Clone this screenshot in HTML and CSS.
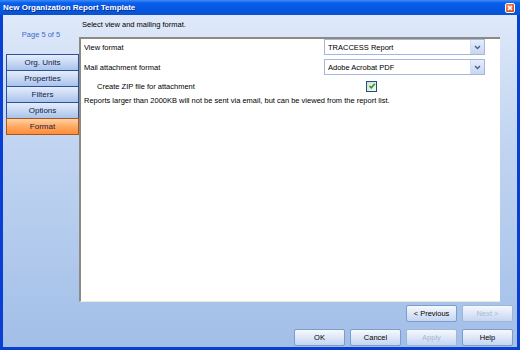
FILE: index.html
```html
<!DOCTYPE html>
<html lang="en">
<head>
    <meta charset="UTF-8">
    <title>New Organization Report Template</title>
    <link rel="stylesheet" href="styles.css">
</head>
<body>
    <div class="window">
        <div class="titlebar">
            <span class="title">New Organization Report Template</span>
            <span class="close-btn">
                <svg width="6" height="6" viewBox="0 0 6 6"><path d="M1 1 L5 5 M5 1 L1 5" stroke="#fff" stroke-width="1.4"/></svg>
            </span>
        </div>

        <div class="frame">
            <div class="main">
                <div class="sidebar">
                    <div class="page-label">Page 5 of 5</div>
                    <div class="nav">
                        <div class="nav-btn">Org. Units</div>
                        <div class="nav-btn">Properties</div>
                        <div class="nav-btn">Filters</div>
                        <div class="nav-btn">Options</div>
                        <div class="nav-btn active">Format</div>
                    </div>
                </div>

                <div class="content">
                    <div class="heading">Select view and mailing format.</div>
                    <div class="panel">
                        <div class="row">
                            <span class="label">View format</span>
                            <div class="select">
                                <span>TRACCESS Report</span>
                                <span class="arrow"><svg width="7" height="5" viewBox="0 0 7 5"><path d="M1 1 L3.5 3.5 L6 1" fill="none" stroke="#4d6185" stroke-width="1.4"/></svg></span>
                            </div>
                        </div>
                        <div class="row">
                            <span class="label">Mail attachment format</span>
                            <div class="select">
                                <span>Adobe Acrobat PDF</span>
                                <span class="arrow"><svg width="7" height="5" viewBox="0 0 7 5"><path d="M1 1 L3.5 3.5 L6 1" fill="none" stroke="#4d6185" stroke-width="1.4"/></svg></span>
                            </div>
                        </div>
                        <div class="row check-row">
                            <span class="label indent">Create ZIP file for attachment</span>
                            <span class="checkbox"><svg width="8" height="8" viewBox="0 0 8 8"><path d="M1.5 4 L3.3 5.8 L6.8 1.8" fill="none" stroke="#21a121" stroke-width="1.6"/></svg></span>
                        </div>
                        <p class="note">Reports larger than 2000KB will not be sent via email, but can be viewed from the report list.</p>
                    </div>
                </div>
            </div>

            <div class="btn-row">
                <button class="btn">&lt; Previous</button>
                <button class="btn" disabled>Next &gt;</button>
            </div>
            <div class="btn-row">
                <button class="btn">OK</button>
                <button class="btn">Cancel</button>
                <button class="btn" disabled>Apply</button>
                <button class="btn">Help</button>
            </div>
        </div>
    </div>
</body>
</html>
```

FILE: styles.css
```css
* {
    margin: 0;
    padding: 0;
    box-sizing: border-box;
}

body {
    font-family: 'Liberation Sans', Arial, sans-serif;
    font-size: 7.5px;
    color: #000;
    background: #fff;
}

.window {
    width: 520px;
    height: 350px;
    display: flex;
    flex-direction: column;
    background: #0a3fd4;
}

.titlebar {
    height: 15px;
    display: flex;
    align-items: center;
    justify-content: space-between;
    padding: 0 5px 0 3px;
    background: linear-gradient(180deg, #3b8cf8 0%, #0a5ee9 20%, #0558e2 60%, #0b52d2 100%);
}

.title {
    color: #fff;
    font-weight: bold;
    font-size: 8px;
    text-shadow: 1px 1px 0 #0a2d8a;
}

.close-btn {
    width: 10px;
    height: 10px;
    display: flex;
    align-items: center;
    justify-content: center;
    border: 1px solid #fff;
    border-radius: 2px;
    background: radial-gradient(circle at 40% 35%, #f5a282 0%, #e4572a 60%, #c8401c 100%);
}

.frame {
    flex: 1;
    display: flex;
    flex-direction: column;
    margin: 0 3px 3px 3px;
    background: linear-gradient(180deg, #dfe9f9 0%, #c3d6f2 35%, #a2bfe8 100%);
}

.main {
    flex: 1;
    display: flex;
}

.sidebar {
    width: 76px;
    display: flex;
    flex-direction: column;
}

.page-label {
    color: #3a6bd0;
    text-align: center;
    height: 39px;
    line-height: 10px;
    padding-top: 15px;
}

.nav {
    margin-left: 3px;
    display: flex;
    flex-direction: column;
}

.nav-btn {
    height: 17px;
    line-height: 15px;
    text-align: center;
    font-size: 8px;
    color: #13204a;
    border: 1px solid #2d4f9e;
    margin-top: -1px;
    background: linear-gradient(180deg, #e4edfb 0%, #c8d9f4 50%, #a9c3ec 100%);
}

.nav-btn:first-child {
    margin-top: 0;
}

.nav-btn.active {
    background: linear-gradient(180deg, #ffd2a6 0%, #ffa962 50%, #ff8b37 100%);
    border-color: #a9571d;
}

.content {
    flex: 1;
    display: flex;
    flex-direction: column;
    margin-right: 17px;
}

.heading {
    height: 22px;
    padding: 5px 0 0 3px;
    line-height: 10px;
}

.panel {
    flex: 1;
    background: #fff;
    border-top: 2px solid #8d8a82;
    border-left: 2px solid #8d8a82;
    border-bottom: 1px solid #efe9d8;
    padding-left: 3px;
}

.row {
    display: flex;
    align-items: center;
    justify-content: space-between;
    height: 16px;
    margin-bottom: 4px;
    padding-right: 15px;
}

.check-row {
    height: 14px;
    margin-top: 0;
    margin-bottom: 0;
    padding-right: 123px;
}

.indent {
    padding-left: 13px;
}

.select {
    width: 161px;
    height: 16px;
    display: flex;
    align-items: center;
    justify-content: space-between;
    border: 1px solid #a5b9d6;
    padding-left: 3px;
    background: #fff;
}

.arrow {
    width: 14px;
    height: 14px;
    display: flex;
    align-items: center;
    justify-content: center;
    background: linear-gradient(180deg, #e6eefc 0%, #c6d6f4 100%);
    border-left: 1px solid #d2ddf0;
}

.checkbox {
    width: 11px;
    height: 11px;
    display: flex;
    align-items: center;
    justify-content: center;
    border: 1px solid #1c5180;
    background: linear-gradient(135deg, #dcdcd6 0%, #f6f6f4 100%);
}

.note {
    margin-top: 3px;
    line-height: 10px;
}

.btn-row {
    display: flex;
    justify-content: flex-end;
    gap: 5px;
    padding: 3px 4px 0 0;
    height: 24px;
}

.btn-row + .btn-row {
    height: 21px;
}

.btn {
    width: 51px;
    height: 17px;
    font-family: inherit;
    font-size: 7.5px;
    color: #000;
    border: 1px solid #7d9bcb;
    border-radius: 2px;
    background: linear-gradient(180deg, #f6f9fe 0%, #dde7f7 50%, #c5d6f1 100%);
}

.btn:disabled {
    color: #a8b8d2;
    border-color: #9fb6da;
}
```
